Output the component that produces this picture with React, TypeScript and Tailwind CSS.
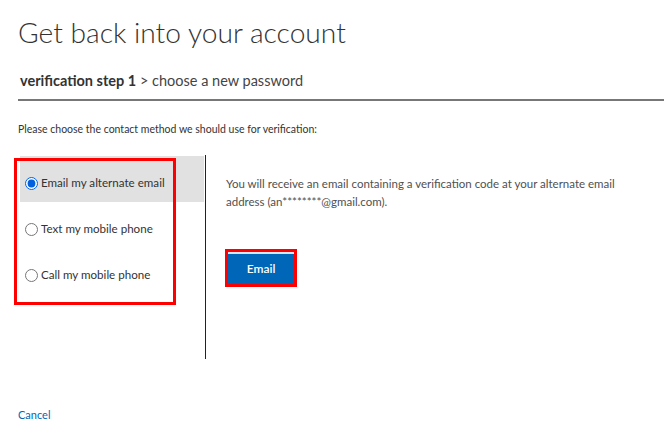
import { useState } from "react";

const options = [
  { id: "email", label: "Email my alternate email" },
  { id: "text", label: "Text my mobile phone" },
  { id: "call", label: "Call my mobile phone" },
];

export default function App() {
  const [method, setMethod] = useState("email");

  return (
    <div
      className="w-[664px] h-[441px] bg-white text-[#333] overflow-hidden pl-[18px]"
      style={{ fontFamily: 'Lato, "Open Sans", sans-serif' }}
    >
      <h1 className="pt-[12px] text-[28.2px] leading-[40px] font-light text-[#333]">
        Get back into your account
      </h1>

      <div className="mt-[19px] border-b-2 border-[#777] pb-[8px] pl-[2px] text-[14.5px] leading-[20px] text-[#444]">
        <span className="font-bold text-[#333]">verification step 1</span>
        <span> &gt; choose a new password</span>
      </div>

      <p className="mt-[20px] text-[10.5px] leading-[16px] text-[#333]">
        Please choose the contact method we should use for verification:
      </p>

      <div className="mt-[18px] flex">
        {/* contact methods */}
        <div className="relative ml-[2px] w-[186px] h-[204px] border-r border-[#222] pt-[1px]">
          {options.map((o) => (
            <label
              key={o.id}
              className={
                "flex items-center h-[46px] pt-[8px] pl-[5px] gap-[3px] text-[11.6px] cursor-pointer " +
                (method === o.id ? "bg-[#e1e1e1] mr-[1px]" : "")
              }
            >
              <input
                type="radio"
                name="method"
                checked={method === o.id}
                onChange={() => setMethod(o.id)}
                className="w-[13px] h-[13px] m-0 accent-[#0060df]"
              />
              <span>{o.label}</span>
            </label>
          ))}
          <div className="absolute left-[-6px] top-[3px] w-[162px] h-[147px] border-[3px] border-[#ff0000] pointer-events-none" />
        </div>

        {/* details */}
        <div className="pl-[20px] pt-[20px]">
          <p className="w-[400px] text-[11.5px] leading-[18px] text-[#505050]">
            You will receive an email containing a verification code at your alternate email
            address (an********@gmail.com).
          </p>
          <div className="mt-[38px] ml-[-1px] w-[72px] h-[38px] border-[3px] border-[#ff0000]">
            <button className="w-full h-full bg-[#0067b8] text-white text-[12px] font-semibold border-t-2 border-[#d6e6f5]">
              Email
            </button>
          </div>
        </div>
      </div>

      <a href="#" className="block mt-[48px] text-[11px] text-[#0067b8]">
        Cancel
      </a>
    </div>
  );
}
